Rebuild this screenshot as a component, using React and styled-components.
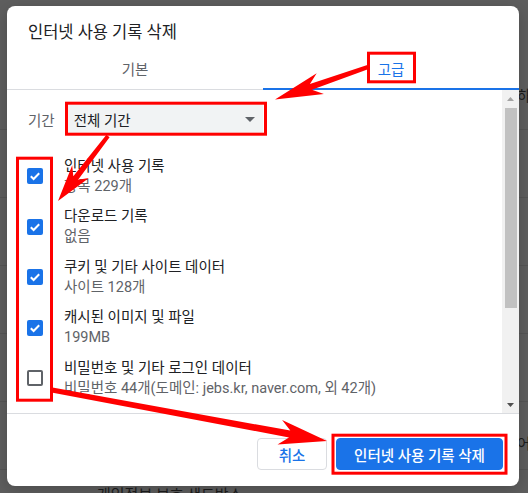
import React from 'react';
import styled, { createGlobalStyle } from 'styled-components';

const GlobalStyle = createGlobalStyle`
  html, body { margin: 0; padding: 0; }
  body {
    font-family: Roboto, "Noto Sans CJK KR", sans-serif;
    background: #5e5e5e;
  }
`;

const Screen = styled.div`
  position: relative;
  width: 528px;
  height: 493px;
  overflow: hidden;
  background: #5e5e5e;
`;

/* ---------- dimmed settings page behind the dialog ---------- */
const BehindPage = styled.div`
  display: flex;
  flex-direction: column;
  padding-top: 62px;
  color: #1c1c1c;
  font-size: 15px;
`;

const BehindRow = styled.div`
  display: grid;
  grid-template-columns: 97px 420px 1fr;
  height: 68px;
  box-sizing: border-box;
  border-bottom: 1px solid #555555;
  align-items: ${(p) => p.$align || 'center'};
  padding-top: ${(p) => p.$pt || 0}px;
  white-space: nowrap;
`;

const BehindText = styled.span`
  grid-column: ${(p) => p.$col};
  line-height: 20px;
`;

/* ---------- dialog ---------- */
const Dialog = styled.div`
  position: absolute;
  left: 7px;
  top: 6px;
  width: 512px;
  height: 480px;
  background: #ffffff;
  border-radius: 8px;
  overflow: hidden;
  display: flex;
  flex-direction: column;
  box-shadow: 0 4px 16px rgba(0, 0, 0, 0.2);
`;

const Title = styled.div`
  padding: 16px 21px 6px;
  font-size: 16.5px;
  line-height: 22px;
  color: #202124;
`;

const TabBar = styled.div`
  display: grid;
  grid-template-columns: 1fr 1fr;
  height: 40px;
  box-sizing: border-box;
  border-bottom: 1px solid #dadce0;
`;

const Tab = styled.div`
  position: relative;
  display: flex;
  align-items: center;
  justify-content: center;
  padding-bottom: 2px;
  font-size: 14.5px;
  color: ${(p) => (p.$active ? '#1a73e8' : '#5f6368')};
  &::after {
    content: '';
    display: ${(p) => (p.$active ? 'block' : 'none')};
    position: absolute;
    left: 0;
    right: 0;
    bottom: -1px;
    height: 2px;
    background: #1a73e8;
  }
`;

const Content = styled.div`
  flex: 1;
  min-height: 0;
  display: flex;
`;

const Body = styled.div`
  flex: 1;
  overflow: hidden;
  padding: 13px 0 0 20px;
`;

const PeriodRow = styled.div`
  display: flex;
  align-items: center;
  gap: 10px;
`;

const PeriodLabel = styled.span`
  margin-left: 1px;
  font-size: 14.5px;
  color: #5f6368;
`;

const Select = styled.div`
  width: 198px;
  height: 32px;
  box-sizing: border-box;
  display: flex;
  align-items: center;
  justify-content: space-between;
  padding: 0 8px 0 9px;
  background: #f1f3f4;
  border-radius: 4px;
  font-size: 14.5px;
  color: #202124;
`;

const ItemList = styled.div`
  margin-top: 16px;
  display: flex;
  flex-direction: column;
`;

const Item = styled.div`
  height: 50.5px;
  flex-shrink: 0;
  display: flex;
  align-items: center;
  gap: 21px;
`;

const Box = styled.div`
  width: 16px;
  height: 16px;
  box-sizing: border-box;
  border-radius: 2px;
  flex-shrink: 0;
  display: flex;
  align-items: center;
  justify-content: center;
  background: ${(p) => (p.$checked ? '#1a73e8' : '#ffffff')};
  border: ${(p) => (p.$checked ? 'none' : '2px solid #5f6368')};
`;

const ItemText = styled.div`
  display: flex;
  flex-direction: column;
  white-space: nowrap;
`;

const ItemTitle = styled.span`
  font-size: 14.5px;
  line-height: 21px;
  color: #202124;
`;

const ItemSub = styled.span`
  font-size: 14.5px;
  line-height: 20px;
  color: #5f6368;
`;

const ScrollBar = styled.div`
  width: 17px;
  flex-shrink: 0;
  background: #f1f1f1;
  display: flex;
  flex-direction: column;
`;

const ScrollButton = styled.div`
  height: 17px;
  display: flex;
  align-items: center;
  justify-content: center;
`;

const ScrollTrack = styled.div`
  flex: 1;
  display: flex;
  justify-content: center;
  padding-top: 1px;
`;

const Thumb = styled.div`
  width: 12px;
  height: 200px;
  margin-left: 1px;
  background: #c1c1c1;
`;

const Footer = styled.div`
  border-top: 1px solid #dadce0;
  padding: 24px 16px 16px;
  display: flex;
  justify-content: flex-end;
  gap: 9px;
`;

const Button = styled.button`
  height: 32px;
  box-sizing: border-box;
  min-width: ${(p) => (p.$primary ? 167 : 70)}px;
  padding: 0 16px;
  border-radius: 4px;
  border: 1px solid ${(p) => (p.$primary ? '#1a73e8' : '#dadce0')};
  background: ${(p) => (p.$primary ? '#1a73e8' : '#ffffff')};
  color: ${(p) => (p.$primary ? '#ffffff' : '#1a73e8')};
  font-family: Roboto, "Noto Sans CJK KR", sans-serif;
  font-size: 14.5px;
  font-weight: 500;
  cursor: pointer;
`;

/* ---------- annotation overlay ---------- */
const Annotations = styled.svg`
  position: absolute;
  left: 0;
  top: 0;
  pointer-events: none;
`;

function arrowPoints([tx, ty], [hx, hy], { headLen, headHalf, notch, tailHalf, shaftHalf }) {
  const dx = hx - tx;
  const dy = hy - ty;
  const L = Math.hypot(dx, dy);
  const ux = dx / L;
  const uy = dy / L;
  const nx = -uy;
  const ny = ux;
  const bx = hx - ux * (headLen - notch);
  const by = hy - uy * (headLen - notch);
  const wx = hx - ux * headLen;
  const wy = hy - uy * headLen;
  const pts = [
    [tx + nx * tailHalf, ty + ny * tailHalf],
    [bx + nx * shaftHalf, by + ny * shaftHalf],
    [wx + nx * headHalf, wy + ny * headHalf],
    [hx, hy],
    [wx - nx * headHalf, wy - ny * headHalf],
    [bx - nx * shaftHalf, by - ny * shaftHalf],
    [tx - nx * tailHalf, ty - ny * tailHalf],
  ];
  return pts.map((p) => p.map((v) => v.toFixed(1)).join(',')).join(' ');
}

const Check = () => (
  <svg width="12" height="12" viewBox="0 0 12 12">
    <path d="M1.8 6.2 L4.6 9 L10.2 3.2" fill="none" stroke="#fff" strokeWidth="2" />
  </svg>
);

const items = [
  { title: '인터넷 사용 기록', sub: '항목 229개', checked: true },
  { title: '다운로드 기록', sub: '없음', checked: true },
  { title: '쿠키 및 기타 사이트 데이터', sub: '사이트 128개', checked: true },
  { title: '캐시된 이미지 및 파일', sub: '199MB', checked: true },
  { title: '비밀번호 및 기타 로그인 데이터', sub: '비밀번호 44개(도메인: jebs.kr, naver.com, 외 42개)', checked: false },
  { title: '자동 채우기 양식 데이터', sub: '', checked: false },
];

export default function App() {
  const red = '#ff0000';
  return (
    <>
      <GlobalStyle />
      <Screen>
        <BehindPage>
          <BehindRow><span /><span /><BehindText $col={3}>하위</BehindText></BehindRow>
          <BehindRow />
          <BehindRow />
          <BehindRow />
          <BehindRow />
          <BehindRow $align="start" $pt={32}><span /><span /><BehindText $col={3}>어</BehindText></BehindRow>
          <BehindRow $align="start" $pt={15}><span /><BehindText $col={2}>개인정보 보호 샌드박스</BehindText></BehindRow>
        </BehindPage>

        <Dialog>
          <Title>인터넷 사용 기록 삭제</Title>
          <TabBar>
            <Tab>기본</Tab>
            <Tab $active>고급</Tab>
          </TabBar>
          <Content>
            <Body>
              <PeriodRow>
                <PeriodLabel>기간</PeriodLabel>
                <Select>
                  <span>전체 기간</span>
                  <svg width="10" height="5" viewBox="0 0 10 5">
                    <path d="M0 0 L10 0 L5 5 Z" fill="#5f6368" />
                  </svg>
                </Select>
              </PeriodRow>
              <ItemList>
                {items.map((it) => (
                  <Item key={it.title}>
                    <Box $checked={it.checked}>{it.checked && <Check />}</Box>
                    <ItemText>
                      <ItemTitle>{it.title}</ItemTitle>
                      {it.sub && <ItemSub>{it.sub}</ItemSub>}
                    </ItemText>
                  </Item>
                ))}
              </ItemList>
            </Body>
            <ScrollBar>
              <ScrollButton>
                <svg width="7" height="4" viewBox="0 0 7 4"><path d="M0 4 L3.5 0 L7 4 Z" fill="#a3a3a3" /></svg>
              </ScrollButton>
              <ScrollTrack><Thumb /></ScrollTrack>
              <ScrollButton>
                <svg width="7" height="4" viewBox="0 0 7 4"><path d="M0 0 L7 0 L3.5 4 Z" fill="#505050" /></svg>
              </ScrollButton>
            </ScrollBar>
          </Content>
          <Footer>
            <Button>취소</Button>
            <Button $primary>인터넷 사용 기록 삭제</Button>
          </Footer>
        </Dialog>

        <Annotations width="528" height="493" viewBox="0 0 528 493">
          <g fill="none" stroke={red} strokeWidth="3">
            <rect x="368.5" y="53.2" width="46" height="28.6" />
            <rect x="66.5" y="103.2" width="199" height="31" />
            <rect x="17.5" y="158.2" width="34" height="242" />
            <rect x="333" y="435.2" width="173" height="38" />
          </g>
          <g fill={red}>
            <polygon points={arrowPoints([368, 67], [275, 99.5], { headLen: 48, headHalf: 11, notch: 10, tailHalf: 2, shaftHalf: 3 })} />
            <polygon points={arrowPoints([108, 136], [58, 201], { headLen: 37, headHalf: 10.5, notch: 8, tailHalf: 2, shaftHalf: 3 })} />
            <polygon points={arrowPoints([52, 390], [327, 441], { headLen: 48, headHalf: 12.5, notch: 10, tailHalf: 2.5, shaftHalf: 3.5 })} />
          </g>
        </Annotations>
      </Screen>
    </>
  );
}
